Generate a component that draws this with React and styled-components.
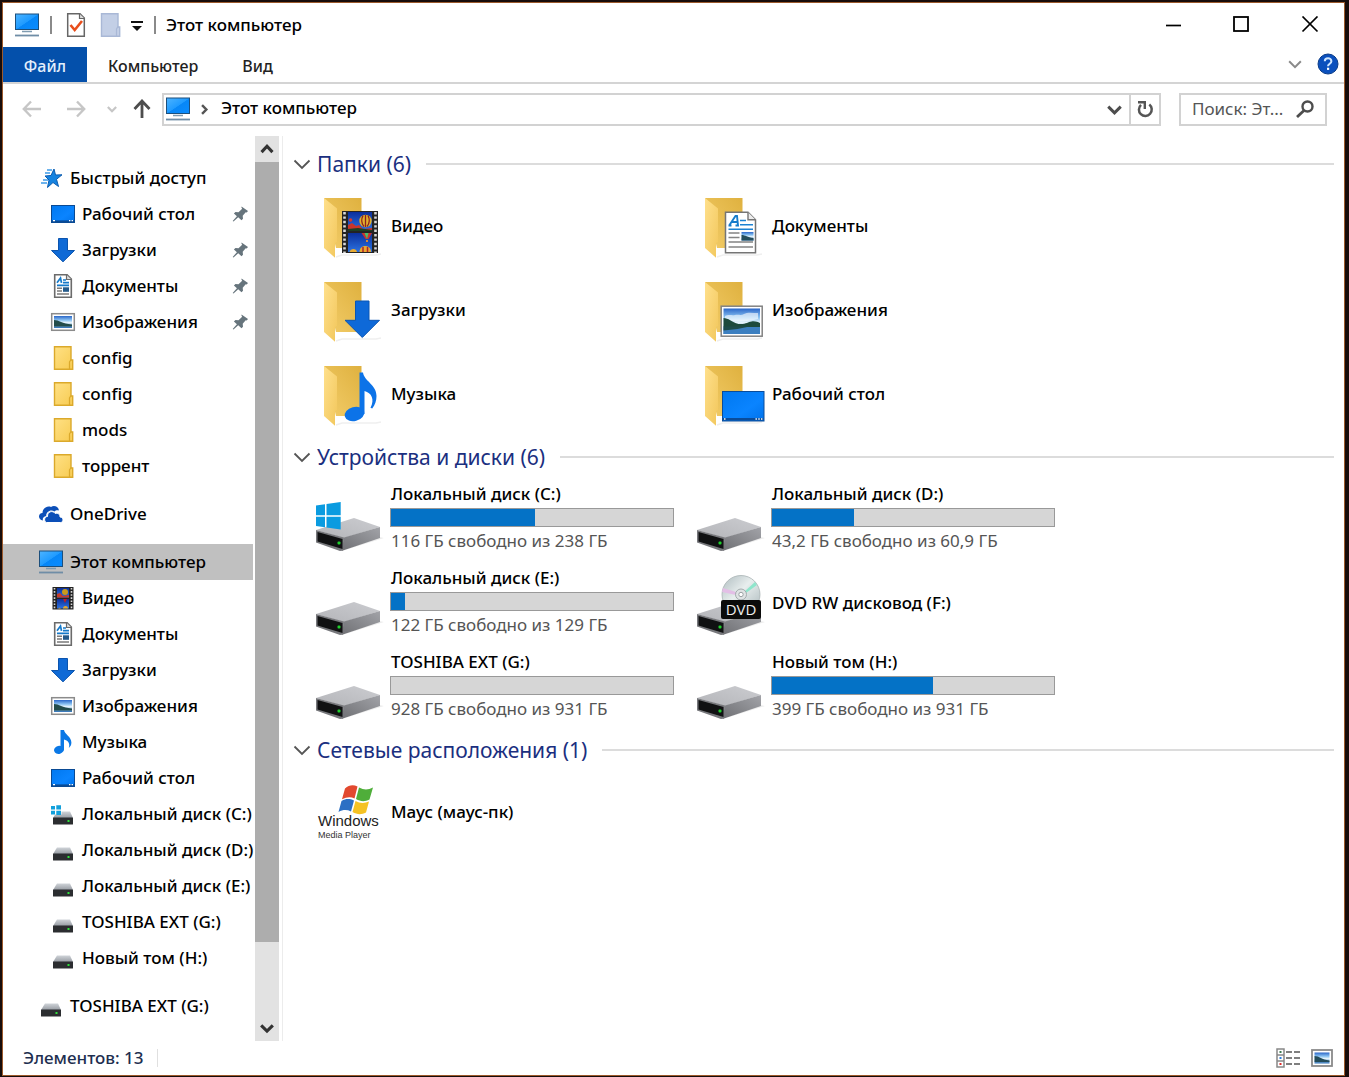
import React from "react";
import styled, { createGlobalStyle } from "styled-components";

const GlobalStyle = createGlobalStyle`
  * {
    box-sizing: border-box;
  }

  body {
    margin: 0;
    background: #170c0a;
    color: #000;
    font-family: "Noto Sans", "Open Sans", sans-serif;
    font-size: 17px;
    font-weight: 500;
    line-height: 24px;
  }

  button,
  input {
    font: inherit;
    color: inherit;
    margin: 0;
    padding: 0;
    border: 0;
    background: none;
  }

  a {
    color: inherit;
    text-decoration: none;
  }

  svg {
    display: block;
    flex: none;
  }
`;

/* ---------- icons ---------- */

const Gradients = () => (
  <HiddenSvg width="0" height="0" aria-hidden="true">
    <defs>
      <linearGradient id="screen" x1="0" y1="0" x2="1" y2="1">
        <stop offset="0" stopColor="#4db4ff" />
        <stop offset="0.5" stopColor="#1f9bff" />
        <stop offset="0.52" stopColor="#0787f7" />
        <stop offset="1" stopColor="#0a8cff" />
      </linearGradient>
      <linearGradient id="desk" x1="0" y1="0" x2="1" y2="1">
        <stop offset="0" stopColor="#0078f0" />
        <stop offset="0.6" stopColor="#0a84ff" />
        <stop offset="1" stopColor="#0072ea" />
      </linearGradient>
      <linearGradient id="flap" x1="0" y1="0" x2="1" y2="1">
        <stop offset="0" stopColor="#ffe08c" />
        <stop offset="1" stopColor="#f2c75c" />
      </linearGradient>
      <linearGradient id="back" x1="1" y1="0" x2="0" y2="1">
        <stop offset="0" stopColor="#dfb13f" />
        <stop offset="1" stopColor="#f3cd6a" />
      </linearGradient>
      <linearGradient id="smallFolder" x1="0" y1="0" x2="1" y2="1">
        <stop offset="0" stopColor="#ffe185" />
        <stop offset="1" stopColor="#f7cb52" />
      </linearGradient>
      <linearGradient id="sky" x1="0" y1="0" x2="0" y2="1">
        <stop offset="0" stopColor="#2a66c8" />
        <stop offset="0.35" stopColor="#8cc4f2" />
        <stop offset="0.55" stopColor="#e6f4fc" />
        <stop offset="1" stopColor="#2b6fb5" />
      </linearGradient>
      <linearGradient id="driveTop" x1="0" y1="1" x2="1" y2="0">
        <stop offset="0" stopColor="#b4b5b9" />
        <stop offset="1" stopColor="#cbccd0" />
      </linearGradient>
      <linearGradient id="driveSide" x1="0" y1="1" x2="1" y2="0">
        <stop offset="0" stopColor="#6f7074" />
        <stop offset="1" stopColor="#a2a3a8" />
      </linearGradient>
      <linearGradient id="driveSmall" x1="0" y1="0" x2="0" y2="1">
        <stop offset="0" stopColor="#d0d4d9" />
        <stop offset="1" stopColor="#969ba2" />
      </linearGradient>
      <linearGradient id="film" x1="0" y1="0" x2="0" y2="1">
        <stop offset="0" stopColor="#0b2f9c" />
        <stop offset="1" stopColor="#2c72e0" />
      </linearGradient>
      <linearGradient id="disc" x1="0" y1="0" x2="1" y2="1">
        <stop offset="0" stopColor="#aebcbf" />
        <stop offset="0.45" stopColor="#e8eeee" />
        <stop offset="1" stopColor="#a9b7ba" />
      </linearGradient>
    </defs>
  </HiddenSvg>
);

const PcIcon = () => (
  <svg width="26" height="24" viewBox="0 0 26 24">
    <rect x="1.5" y="1" width="23" height="15.5" fill="url(#screen)" stroke="#1c4f7c" />
    <path d="M8 18.5h10" stroke="#7f9bb0" strokeWidth="1.5" />
    <path d="M1 22.5h24" stroke="#6f8da6" strokeWidth="1.8" />
  </svg>
);

const DeskIcon = () => (
  <svg width="26" height="24" viewBox="0 0 26 24">
    <rect x="1.5" y="3.5" width="23" height="17" fill="url(#desk)" stroke="#0a4a94" />
    <path d="M2 19.2h22" stroke="#0a4a94" strokeWidth="1.6" />
    <path d="M3 18.7h2M19 18.7h1.4M21.6 18.7h1.4" stroke="#fff" strokeWidth="1.2" />
  </svg>
);

const DownIcon = () => (
  <svg width="26" height="24" viewBox="0 0 26 24">
    <path d="M8.5.5h9v12h7L13 23.8 1.5 12.5h7z" fill="#0f6ad6" stroke="#0b54ae" />
  </svg>
);

const DocIcon = () => (
  <svg width="26" height="24" viewBox="0 0 26 24">
    <path d="M4.7.7H17L21.3 5v18.3H4.7z" fill="#fff" stroke="#6b6b6b" strokeWidth="1.6" />
    <path d="M16.5.7v4.8h4.8" fill="#ddd" stroke="#6b6b6b" strokeWidth="1.2" />
    <path d="M7 8.8 10.5 4l1 4.8M13 6h3M13 8.6h6M7 11.3h12" stroke="#1479c9" strokeWidth="1.7" fill="none" />
    <path d="M7 14.2h5M7 17h5M7 20h12" stroke="#7a7a7a" strokeWidth="1.4" />
    <rect x="13" y="13.3" width="6" height="4.5" fill="#245a8a" />
  </svg>
);

const PicIcon = () => (
  <svg width="26" height="24" viewBox="0 0 26 24">
    <rect x="1.7" y="3.7" width="22.6" height="16.6" fill="#fff" stroke="#8b8b8b" strokeWidth="1.5" />
    <rect x="4" y="6" width="18" height="12" fill="url(#sky)" />
    <path d="M4 10c5 0 8 3.5 18 4.500v2H4z" fill="#234c4a" />
  </svg>
);

const FolderIcon = ({ fill = "url(#smallFolder)", stroke = "#dba92b" }) => (
  <svg width="26" height="24" viewBox="0 0 26 24">
    <path d="M4.5.7H21V14h1.7v9.3H4.5z" fill={fill} stroke={stroke} strokeWidth="1.4" />
    <path d="M19.5 23v-7l1.5-2.5" fill="none" stroke={stroke} strokeWidth="1.2" />
  </svg>
);

const NoteIcon = () => (
  <svg width="26" height="24" viewBox="0 0 26 24">
    <ellipse cx="9" cy="19.8" rx="5" ry="4" transform="rotate(-15 9 19.8)" fill="#0a78e6" />
    <path
      d="M10.5 0H14c.6 4.500 7.400 6.500 7.400 12.500 0 2.600-1 4-2.600 5.500 1.600-5-1-7.500-4.800-8.500V20h-3.500z"
      fill="#0a78e6"
    />
  </svg>
);

const FilmIcon = () => (
  <svg width="26" height="24" viewBox="0 0 26 24">
    <rect x="2.5" y="1" width="21" height="22.5" fill="#222" />
    <path d="M4.5 2v21M21.5 2v21" stroke="#d8d8d8" strokeWidth="1.6" strokeDasharray="1.6 1.5" />
    <rect x="7" y="2" width="12" height="9.5" fill="url(#film)" />
    <rect x="7" y="13" width="12" height="9.5" fill="url(#film)" />
    <path d="M7 8l3-1 3 3 6-1v2.5H7z" fill="#c33a2b" />
    <circle cx="15" cy="6" r="3" fill="#c99a1e" />
    <path d="M13 13h4l-2 4z" fill="#b3212b" />
    <path d="M13 22.5a2.5 2.5 0 0 1 5 0zM8 22.5a2 2 0 0 1 3 0z" fill="#e0a62d" />
  </svg>
);

const StarIcon = () => (
  <svg width="26" height="24" viewBox="0 0 26 24">
    <path
      d="M16 3l1.500 6 6.500-.2-5.500 4.500 2 7.200-5.500-4-5.500 5 1.500-7.500-4-4 6-.5z"
      fill="#1583e0"
      stroke="#0b5cb0"
      strokeWidth="1"
    />
    <path d="M9 4h5M7 7h5M5 14h5M3 17h6" stroke="#3d9be8" strokeWidth="1.3" />
  </svg>
);

const CloudIcon = () => (
  <svg width="26" height="24" viewBox="0 0 26 24">
    <path
      d="M5 18.5C-.5 18 0 11 4.5 11c0-5 5-7.500 8.500-6 3-2 7.500-.5 8 3.500-2-.7-3.500 0-4.500 1-4-2.500-8.500.5-8.300 4.500-2.700.7-4 2.500-3.200 4.500z"
      fill="#0c4fb8"
    />
    <path
      d="M8.5 20.5c-3-1-2.300-6 1-6-.3-5 5.500-6.500 7.700-3 2.800-1 5 1 4.800 3.500 4 .3 3.700 5.500.5 5.500z"
      fill="#0c4fb8"
      stroke="#fff"
      strokeWidth="1"
    />
  </svg>
);

const SmallDriveIcon = ({ windows }) => (
  <svg width="26" height="24" viewBox="0 0 26 24">
    <path d="M7 9.5h13l3 6.5H3z" fill="url(#driveSmall)" />
    <rect x="3" y="15.5" width="20" height="7" rx=".6" fill="#2b2d30" />
    <rect x="17.5" y="18" width="2" height="2" fill="#2fe03a" />
    {windows && (
      <>
        <rect x=".5" y="2" width="11" height="10.500" fill="#fff" />
        <path d="M1 4h4v3.600H1zM6.300 3.300H11v4.300H6.300zM1 8.800h4v3.600H1zM6.300 8.800H11v4.300H6.300z" fill="#12a0dc" />
      </>
    )}
  </svg>
);

const PinIcon = () => (
  <svg width="17" height="16" viewBox="0 0 17 16">
    <path
      d="M9.5.5 16 5l-1.300 1.500-1-.2-3 3.500.3 3-1.500 1.400-3.300-3-4.700 4.300-.8-.6 4.200-4.700-3-2.700L3.500 6l3 .3 3.700-3.500-.7-1z"
      fill="#66747c"
    />
  </svg>
);

const FolderBase = ({ children }) => (
  <svg width="72" height="64" viewBox="0 0 72 64">
    <path d="M22 63l6-2h34l5-1" fill="none" stroke="#efefef" strokeWidth="1.5" />
    <path d="M10 4h37.5v50H22z" fill="url(#back)" />
    <path d="M10 4l13 10.5V48l-2 1v14.7L10 54z" fill="url(#flap)" />
    {children}
  </svg>
);

const BigVideo = () => (
  <FolderBase>
    <rect x="28" y="17" width="36" height="42" fill="#232323" />
    <path d="M30.5 18v41M61.5 18v41" stroke="#d9d9d9" strokeWidth="2.6" strokeDasharray="2.4 2" />
    <rect x="34" y="18" width="24" height="19" fill="url(#film)" />
    <rect x="34" y="39" width="24" height="19" fill="url(#film)" />
    <path d="M34 31l4-2 4 3 3-1 4 4 9-1v3H34z" fill="#c8352a" />
    <path d="M34 35l10-1 14 2v1H34z" fill="#1d3f22" />
    <circle cx="36.5" cy="26" r="1.8" fill="#d43b2e" />
    <circle cx="51.5" cy="27" r="6.2" fill="#e1b12c" />
    <path d="M49 21.5c-2 4-1.500 8 1 11M54 21.5c2 4 1.500 8-1 11M51.5 21v12" stroke="#8c1f1f" strokeWidth="1.3" fill="none" />
    <path d="M47.5 39H58l-3.500 6h-3z" fill="#c9322d" />
    <path d="M50.5 39h4L53 45z" fill="#46c06a" />
    <path d="M52 46h2v2h-2z" fill="#d88a35" />
    <path d="M45.5 58c0-8 11.5-8 11.5 0z" fill="#e7a930" />
    <path d="M49 53v5M53.5 53v5" stroke="#b3222a" strokeWidth="1.5" />
    <path d="M35.5 58c1-4 7-4 7.500 0z" fill="#e7a930" />
  </FolderBase>
);

const BigDown = () => (
  <FolderBase>
    <path d="M41.5 23H55v19.3h10.5L48.3 59.5 31 42.3h10.5z" fill="#0e69d8" stroke="#0a56b4" />
  </FolderBase>
);

const BigNote = () => (
  <FolderBase>
    <ellipse cx="40.5" cy="52" rx="10" ry="7" transform="rotate(-15 40.5 52)" fill="#0c73e8" />
    <path
      d="M45.5 10.5H49c1 8.500 13.500 12 13.500 23.500 0 5-1.500 9-4.300 12.600l-1.700-.8c4.500-8.500 1-15-6-16.800V52h-5z"
      fill="#0c73e8"
    />
  </FolderBase>
);

const BigDoc = () => (
  <FolderBase>
    <path d="M30.5 18.2H53l7.5 7.5v33h-30z" fill="#fff" stroke="#757575" strokeWidth="1.5" />
    <path d="M53 18.2v7.500h7.500" fill="#ededed" stroke="#757575" strokeWidth="1.4" />
    <path d="M33.5 31.5h3M34.5 31l6-9H42l1 9.500h-2.500M37 28h5" stroke="#157bcb" strokeWidth="1.9" fill="none" />
    <path d="M45 26.5h6M45 30.7h13M33.5 35.3H58" stroke="#1c82d2" strokeWidth="1.4" />
    <path d="M33.5 39h11M33.5 43.5h11M33.5 48H58M33.5 53H58" stroke="#848484" strokeWidth="1.3" />
    <rect x="46.5" y="38" width="12" height="8.5" fill="url(#sky)" />
    <path d="M46.5 41c4 0 6 2.500 12 3v2.500h-12z" fill="#254e5c" />
  </FolderBase>
);

const BigPic = () => (
  <FolderBase>
    <rect x="26.2" y="28.2" width="41" height="30" fill="#fff" stroke="#828282" strokeWidth="1.5" />
    <rect x="28.5" y="30.5" width="36.5" height="25.5" fill="url(#sky)" />
    <path d="M30 38c4-2 7 0 10-1s6 1 9-1 9-1 14-1v6c-10 3-23 3-33 1z" fill="#fff" opacity=".6" />
    <path d="M28.5 40c5 0 8 4 15 6 8 .5 9-2 13-2.500 4-.5 6 .5 8.500 1.500v4H28.500z" fill="#1d4a3c" />
    <path d="M28.500 49H65v7H28.500z" fill="#3c7fc0" />
    <path d="M28.500 48.500h26l-12 2.500-14 1.500z" fill="#1e4c4a" />
  </FolderBase>
);

const BigDesk = () => (
  <FolderBase>
    <rect x="27.5" y="29.5" width="41.5" height="29.5" fill="url(#desk)" stroke="#0a4c9a" />
    <path d="M28 57.3h40.5" stroke="#0a4c9a" strokeWidth="2.4" />
    <path d="M29 57h1.500M60.500 57h1.400M63.300 57h1.400M66 57h1.400" stroke="#fff" strokeWidth="1.3" />
  </FolderBase>
);

const DriveShape = () => (
  <>
    <path d="M28 64l42-13-5-1z" fill="#ececec" />
    <path d="M2 43l38-12 26 9-36 11z" fill="url(#driveTop)" />
    <path d="M30 50.5L66 40v11L27.5 64z" fill="url(#driveSide)" />
    <path d="M2 43l28 7.500-1 13-3 .5L2 55.500z" fill="#77787c" />
    <path d="M3.500 45l25 7v10L3.500 54.500z" fill="#101112" />
    <rect x="23.5" y="54.5" width="3" height="3" rx="1" fill="#1fd02c" />
  </>
);

const BigDrive = ({ windows }) => (
  <svg width="72" height="64" viewBox="0 0 72 64">
    <DriveShape />
    {windows && (
      <path
        d="M2 18.500l9-1.200v11H2zM12.500 17.100l14.200-2V28.300H12.500zM2 29.800h9v10.500l-9-1.200zM12.500 29.800h14.200v12.700l-14.200-2z"
        fill="#0a9be0"
      />
    )}
  </svg>
);

const BigDvd = () => (
  <svg width="72" height="64" viewBox="0 0 72 64">
    <DriveShape />
    <circle cx="46" cy="23.5" r="19" fill="url(#disc)" stroke="#a8b2b4" strokeWidth=".8" />
    <path d="M50 20L60 11l2 3-11 8z" fill="#8fe6cc" />
    <path d="M28 17l13 4v3l-14-3z" fill="#e3bfe6" />
    <circle cx="46" cy="23.5" r="5.5" fill="#dfe3e4" stroke="#a3abad" />
    <circle cx="46" cy="23.5" r="2.2" fill="#fff" stroke="#9aa2a4" />
    <rect x="26" y="29" width="40" height="19" rx="2" fill="#0b0b0b" />
    <text x="46" y="44" textAnchor="middle" fontFamily="Open Sans" fontSize="15" fontWeight="400" fill="#eee">
      DVD
    </text>
  </svg>
);

const MediaPlayerIcon = () => (
  <svg width="72" height="64" viewBox="0 0 72 64">
    <path d="M31 8.500c4-3.500 8-4 12.500-2l-3 12c-4-2-8-1.500-12.500.8z" fill="#e2492f" />
    <path d="M45 7.500c5 2.500 9 2.500 14 0l-3.500 12c-5 2.500-9 2-13.500-.5z" fill="#4fae3a" />
    <path d="M27.500 21c4.500-2.500 8-2.500 12.500-.5l-3 11c-4-2-8-2-12.500.5z" fill="#2b6fc4" />
    <path d="M41.500 21c4.500 2.500 9 2.500 13.500.5l-3 11c-5 2.500-9 2-13.500-.5z" fill="#f5c224" />
    <text x="4" y="46" fontFamily="Liberation Sans" fontSize="15" fontWeight="400" fill="#222">
      Windows
    </text>
    <text x="4" y="58" fontFamily="Liberation Sans" fontSize="9" fontWeight="400" fill="#333">
      Media Player
    </text>
  </svg>
);

const Chevron = ({ size = 18, color = "#555", width = 2, up, right }) => (
  <svg width={size} height={size} viewBox="0 0 18 18">
    <path
      d={up ? "M2 13l7-7.500 7 7.500" : right ? "M5 2l7 7-7 7" : "M1.500 5.500 9 13l7.500-7.500"}
      fill="none"
      stroke={color}
      strokeWidth={width}
    />
  </svg>
);

/* ---------- data ---------- */

const tree = [
  {
    root: { label: "Быстрый доступ", icon: <StarIcon /> },
    items: [
      { label: "Рабочий стол", icon: <DeskIcon />, pinned: true },
      { label: "Загрузки", icon: <DownIcon />, pinned: true },
      { label: "Документы", icon: <DocIcon />, pinned: true },
      { label: "Изображения", icon: <PicIcon />, pinned: true },
      { label: "config", icon: <FolderIcon /> },
      { label: "config", icon: <FolderIcon /> },
      { label: "mods", icon: <FolderIcon /> },
      { label: "торрент", icon: <FolderIcon /> },
    ],
  },
  { root: { label: "OneDrive", icon: <CloudIcon /> }, items: [] },
  {
    root: { label: "Этот компьютер", icon: <PcIcon />, active: true },
    items: [
      { label: "Видео", icon: <FilmIcon /> },
      { label: "Документы", icon: <DocIcon /> },
      { label: "Загрузки", icon: <DownIcon /> },
      { label: "Изображения", icon: <PicIcon /> },
      { label: "Музыка", icon: <NoteIcon /> },
      { label: "Рабочий стол", icon: <DeskIcon /> },
      { label: "Локальный диск (C:)", icon: <SmallDriveIcon windows /> },
      { label: "Локальный диск (D:)", icon: <SmallDriveIcon /> },
      { label: "Локальный диск (E:)", icon: <SmallDriveIcon /> },
      { label: "TOSHIBA EXT (G:)", icon: <SmallDriveIcon /> },
      { label: "Новый том (H:)", icon: <SmallDriveIcon /> },
    ],
  },
  { root: { label: "TOSHIBA EXT (G:)", icon: <SmallDriveIcon /> }, items: [] },
];

const sections = [
  {
    title: "Папки (6)",
    items: [
      { label: "Видео", icon: <BigVideo /> },
      { label: "Документы", icon: <BigDoc /> },
      { label: "Загрузки", icon: <BigDown /> },
      { label: "Изображения", icon: <BigPic /> },
      { label: "Музыка", icon: <BigNote /> },
      { label: "Рабочий стол", icon: <BigDesk /> },
    ],
  },
  {
    title: "Устройства и диски (6)",
    items: [
      { label: "Локальный диск (C:)", icon: <BigDrive windows />, used: 51, space: "116 ГБ свободно из 238 ГБ" },
      { label: "Локальный диск (D:)", icon: <BigDrive />, used: 29, space: "43,2 ГБ свободно из 60,9 ГБ" },
      { label: "Локальный диск (E:)", icon: <BigDrive />, used: 5, space: "122 ГБ свободно из 129 ГБ" },
      { label: "DVD RW дисковод (F:)", icon: <BigDvd /> },
      { label: "TOSHIBA EXT (G:)", icon: <BigDrive />, used: 0, space: "928 ГБ свободно из 931 ГБ" },
      { label: "Новый том (H:)", icon: <BigDrive />, used: 57, space: "399 ГБ свободно из 931 ГБ" },
    ],
  },
  {
    title: "Сетевые расположения (1)",
    items: [{ label: "Маус (маус-пк)", icon: <MediaPlayerIcon /> }],
  },
];

/* ---------- parts ---------- */

const TitleBar = () => (
  <Header>
    <PcIcon />
    <Separator $space={10} />
    <IconButton $width={28} aria-label="Свойства">
      <svg width="26" height="26" viewBox="0 0 26 26">
        <path d="M4.7 1.7H17L21.3 6v18.3H4.7z" fill="#fff" stroke="#666" strokeWidth="1.5" />
        <path d="M16.5 1.7v4.8h4.8" fill="#ddd" stroke="#666" strokeWidth="1.2" />
        <path d="M7.5 13l4.2 5L19 9" fill="none" stroke="#e84e1b" strokeWidth="2.6" />
      </svg>
    </IconButton>
    <IconButton $width={40} aria-label="Новая папка">
      <FolderIcon fill="#c3cfe6" stroke="#a9b8d6" />
    </IconButton>
    <IconButton $width={14} aria-label="Настройка панели">
      <svg width="12" height="12" viewBox="0 0 12 12">
        <path d="M0 3h12" stroke="#111" strokeWidth="2" />
        <path d="M1 7h10l-5 5z" fill="#111" />
      </svg>
    </IconButton>
    <Separator $space={10} />
    <Title>Этот компьютер</Title>
    <WindowButton aria-label="Свернуть">
      <svg width="18" height="18" viewBox="0 0 18 18">
        <path d="M1 9.5h15" stroke="#000" strokeWidth="1.7" />
      </svg>
    </WindowButton>
    <WindowButton aria-label="Развернуть">
      <svg width="18" height="18" viewBox="0 0 18 18">
        <rect x="1" y="1" width="14" height="14" fill="none" stroke="#000" strokeWidth="1.8" />
      </svg>
    </WindowButton>
    <WindowButton aria-label="Закрыть">
      <svg width="18" height="18" viewBox="0 0 18 18">
        <path d="M1.5.5l15 15M16.5.5l-15 15" stroke="#000" strokeWidth="1.7" />
      </svg>
    </WindowButton>
  </Header>
);

const Ribbon = () => (
  <Tabs>
    <FileTab>Файл</FileTab>
    <Tab>Компьютер</Tab>
    <Tab>Вид</Tab>
    <TabsEnd>
      <IconButton $width={16} aria-label="Развернуть ленту">
        <Chevron size={14} color="#8a8a8a" width={2.6} />
      </IconButton>
      <IconButton $width={22} aria-label="Справка">
        <svg width="22" height="22" viewBox="0 0 22 22">
          <circle cx="11" cy="11" r="10" fill="#0b50bd" stroke="#0a3c88" />
          <path d="M7.8 8.3c0-4 6.600-4 6.600 0 0 2.500-3.400 2.500-3.400 5" fill="none" stroke="#cfe6ff" strokeWidth="2" />
          <rect x="10" y="14.7" width="2.2" height="2.2" fill="#fff" />
        </svg>
      </IconButton>
    </TabsEnd>
  </Tabs>
);

const AddressRow = () => (
  <Address>
    <IconButton $width={37} aria-label="Назад">
      <svg width="20" height="18" viewBox="0 0 20 18">
        <path d="M19 9H2M9 1.5 1.8 9 9 16.5" fill="none" stroke="#c6c6c6" strokeWidth="2.4" />
      </svg>
    </IconButton>
    <IconButton $width={52} aria-label="Вперёд">
      <svg width="20" height="18" viewBox="0 0 20 18">
        <path d="M1 9h17M11 1.5 18.2 9 11 16.5" fill="none" stroke="#c6c6c6" strokeWidth="2.4" />
      </svg>
    </IconButton>
    <IconButton $width={20} aria-label="Последние расположения">
      <Chevron size={10} color="#c6c6c6" width={4} />
    </IconButton>
    <IconButton $width={40} aria-label="Вверх">
      <svg width="20" height="20" viewBox="0 0 20 20">
        <path d="M10 19V2M2.5 10 10 2l7.5 8" fill="none" stroke="#4d4d4d" strokeWidth="2.8" />
      </svg>
    </IconButton>
    <PathBox>
      <PcIcon />
      <Chevron size={11} color="#555" width={4} right />
      <PathText href="#">Этот компьютер</PathText>
      <IconButton $width={30} aria-label="Предыдущие расположения">
        <Chevron size={15} color="#4d4d4d" width={3.6} />
      </IconButton>
      <RefreshButton aria-label="Обновить">
        <svg width="18" height="20" viewBox="0 0 18 20">
          <path d="M13.3 5.5A6.400 6.400 0 1 1 5 5.800" fill="none" stroke="#555" strokeWidth="2.5" />
          <path d="M2 3.2h6.800V10" fill="none" stroke="#555" strokeWidth="2.4" />
        </svg>
      </RefreshButton>
    </PathBox>
    <SearchBox>
      <SearchInput type="text" aria-label="Поиск" placeholder="Поиск: Эт..." />
      <svg width="18" height="18" viewBox="0 0 18 18">
        <circle cx="11.5" cy="6.5" r="5" fill="none" stroke="#4d4d4d" strokeWidth="2.4" />
        <path d="M8 10.5 1 17" stroke="#4d4d4d" strokeWidth="2.8" />
      </svg>
    </SearchBox>
  </Address>
);

const TreeItem = ({ item, nested }) => (
  <TreeLink href="#" $nested={nested} $active={item.active}>
    {item.icon}
    <TreeLabel>{item.label}</TreeLabel>
    {item.pinned && <PinIcon />}
  </TreeLink>
);

const Sidebar = () => (
  <Side>
    <Tree aria-label="Область навигации">
      {tree.map((group) => (
        <TreeGroup key={group.root.label}>
          <TreeItem item={group.root} />
          {group.items.map((item, i) => (
            <TreeItem key={i} item={item} nested />
          ))}
        </TreeGroup>
      ))}
    </Tree>
    <Scrollbar>
      <ScrollButton aria-label="Прокрутить вверх">
        <Chevron size={14} color="#333" width={4} up />
      </ScrollButton>
      <Thumb />
      <Track />
      <ScrollButton aria-label="Прокрутить вниз">
        <Chevron size={14} color="#333" width={4} />
      </ScrollButton>
    </Scrollbar>
  </Side>
);

const Section = ({ title, items }) => (
  <section>
    <SectionHeader>
      <Chevron size={18} color="#555" width={1.8} />
      <SectionTitle>{title}</SectionTitle>
      <SectionLine />
    </SectionHeader>
    <Grid>
      {items.map((item) => (
        <Tile href="#" key={item.label}>
          {item.icon}
          <TileBody>
            <TileName>{item.label}</TileName>
            {item.space && (
              <>
                <Bar role="progressbar" aria-label={item.label} aria-valuenow={item.used}>
                  <BarFill style={{ width: `${item.used}%` }} />
                </Bar>
                <TileSpace>{item.space}</TileSpace>
              </>
            )}
          </TileBody>
        </Tile>
      ))}
    </Grid>
  </section>
);

const App = () => (
  <>
    <GlobalStyle />
    <Gradients />
    <Window>
      <TitleBar />
      <Ribbon />
      <AddressRow />
      <Body>
        <Sidebar />
        <Content>
          {sections.map((section) => (
            <Section key={section.title} {...section} />
          ))}
        </Content>
      </Body>
      <StatusBar>
        <StatusText>Элементов: 13</StatusText>
        <IconButton $width={26} aria-label="Таблица">
          <svg width="26" height="20" viewBox="0 0 26 20">
            <path d="M2 1h7v18H2zM2 7h7M2 13h7" fill="#fff" stroke="#888" strokeWidth="1.5" />
            <path d="M11 4h6M19 4h6M11 10h6M19 10h6M11 16h6M19 16h6" stroke="#555" strokeWidth="1.6" />
            <rect x="4.5" y="3" width="2" height="2" fill="#3c7a52" />
            <rect x="4.5" y="9" width="2" height="2" fill="#2b7de0" />
            <rect x="4.5" y="15" width="2" height="2" fill="#e02b2b" />
          </svg>
        </IconButton>
        <IconButton $width={26} aria-label="Крупные значки">
          <svg width="22" height="18" viewBox="0 0 22 18">
            <rect x="1" y="1" width="20" height="16" fill="#fff" stroke="#8a8a8a" strokeWidth="1.8" />
            <rect x="3.5" y="3.5" width="15" height="11" fill="url(#sky)" />
            <path d="M3.5 7c5 0 7 3.500 15 4.500V13h-15z" fill="#234c5a" />
          </svg>
        </IconButton>
      </StatusBar>
    </Window>
  </>
);

/* ---------- styles ---------- */

const HiddenSvg = styled.svg`
  position: absolute;
`;

const Window = styled.div`
  display: flex;
  flex-direction: column;
  min-height: calc(100vh - 3px);
  margin: 2px 4px 1px 2px;
  border: 1px solid #9c5a2c;
  background: #fff;
`;

const IconButton = styled.button`
  display: flex;
  align-items: center;
  justify-content: center;
  flex: none;
  width: ${(p) => p.$width}px;
  height: 30px;
`;

const Header = styled.header`
  display: flex;
  align-items: center;
  height: 44px;
  padding-left: 11px;
`;

const Separator = styled.span`
  width: 2px;
  height: 18px;
  margin: 0 ${(p) => p.$space}px;
  background: #8a8a8a;
`;

const Title = styled.h1`
  flex: 1;
  margin: 0;
  font-size: 17px;
  font-weight: 500;
`;

const WindowButton = styled.button`
  display: flex;
  align-items: center;
  justify-content: center;
  width: 68px;
  height: 44px;
`;

const Tabs = styled.nav`
  display: flex;
  height: 37px;
  border-bottom: 2px solid #d4d4d4;
`;

const Tab = styled.button`
  padding: 2px 23px 0 21px;
  color: #222;
  font-size: 16px;
`;

const FileTab = styled(Tab)`
  width: 84px;
  padding: 2px 0 0;
  background: #0450ab;
  color: #e3effc;
`;

const TabsEnd = styled.div`
  display: flex;
  align-items: center;
  gap: 14px;
  margin-left: auto;
  padding: 0 5px 2px 0;
`;

const Address = styled.div`
  display: flex;
  align-items: center;
  height: 52px;
  padding: 0 17px 2px 10px;
`;

const PathBox = styled.div`
  display: flex;
  align-items: center;
  flex: 1;
  height: 33px;
  padding-left: 1px;
  border: 2px solid #d2d2d2;

  svg + svg {
    margin-left: 8px;
  }
`;

const PathText = styled.a`
  flex: 1;
  padding-bottom: 2px;
  padding-left: 11px;
`;

const RefreshButton = styled.button`
  display: flex;
  align-items: center;
  justify-content: center;
  align-self: stretch;
  width: 30px;
  border-left: 2px solid #d2d2d2;
`;

const SearchBox = styled.div`
  display: flex;
  align-items: center;
  width: 148px;
  height: 33px;
  margin-left: 18px;
  padding: 0 11px;
  border: 2px solid #d2d2d2;
`;

const SearchInput = styled.input`
  flex: 1;
  min-width: 0;
  font-weight: 400;

  &::placeholder {
    color: #555;
    opacity: 1;
  }
`;

const Body = styled.div`
  display: flex;
  flex: 1;
`;

const Side = styled.div`
  display: flex;
  width: 280px;
  border-right: 1px solid #ececec;
`;

const Tree = styled.nav`
  display: flex;
  flex-direction: column;
  flex: 1;
  gap: 12px;
  min-width: 0;
  margin-right: 2px;
  padding-top: 24px;
`;

const TreeGroup = styled.div`
  display: flex;
  flex-direction: column;
`;

const TreeLink = styled.a`
  display: flex;
  align-items: center;
  gap: 6px;
  height: 36px;
  padding: 0 4px 0 ${(p) => (p.$nested ? 47 : 35)}px;
  background: ${(p) => (p.$active ? "#c0c0c0" : "transparent")};
  white-space: nowrap;
`;

const TreeLabel = styled.span`
  flex: 1;
`;

const Scrollbar = styled.div`
  display: flex;
  flex-direction: column;
  width: 24px;
  margin-right: 3px;
  background: #e2e2e2;
`;

const ScrollButton = styled.button`
  display: flex;
  align-items: center;
  justify-content: center;
  height: 26px;
`;

const Thumb = styled.div`
  flex: 780;
  background: #adadad;
`;

const Track = styled.div`
  flex: 73;
`;

const Content = styled.main`
  flex: 1;
  min-width: 0;
  padding: 7px 10px 0;
`;

const SectionHeader = styled.button`
  display: flex;
  align-items: center;
  width: 100%;
  height: 41px;
`;

const SectionTitle = styled.span`
  margin: 0 15px 0 6px;
  color: #1b2f80;
  font-size: 21px;
  font-weight: 400;
`;

const SectionLine = styled.span`
  flex: 1;
  height: 2px;
  background: #dcdcdc;
`;

const Grid = styled.div`
  display: grid;
  grid-template-columns: repeat(auto-fill, 381px);
  padding-left: 21px;
`;

const Tile = styled.a`
  display: flex;
  align-items: center;
  gap: 4px;
  height: 84px;
`;

const TileBody = styled.div`
  display: flex;
  flex-direction: column;
`;

const TileName = styled.span`
  padding-left: 1px;
`;

const Bar = styled.div`
  width: 284px;
  height: 19px;
  margin: 2px 0;
  border: 1px solid #999;
  background: #d6d6d6;
`;

const BarFill = styled.div`
  height: 100%;
  background: #0472c6;
`;

const TileSpace = styled.span`
  margin-bottom: 4px;
  padding-left: 1px;
  color: #555;
  font-weight: 400;
`;

const StatusBar = styled.footer`
  display: flex;
  align-items: center;
  height: 34px;
  padding: 0 9px 0 20px;
  gap: 8px;
`;

const StatusText = styled.span`
  margin-right: auto;
  padding-right: 13px;
  border-right: 1px solid #e0e0e0;
  color: #1e2f50;
  line-height: 18px;
`;

export default App;
